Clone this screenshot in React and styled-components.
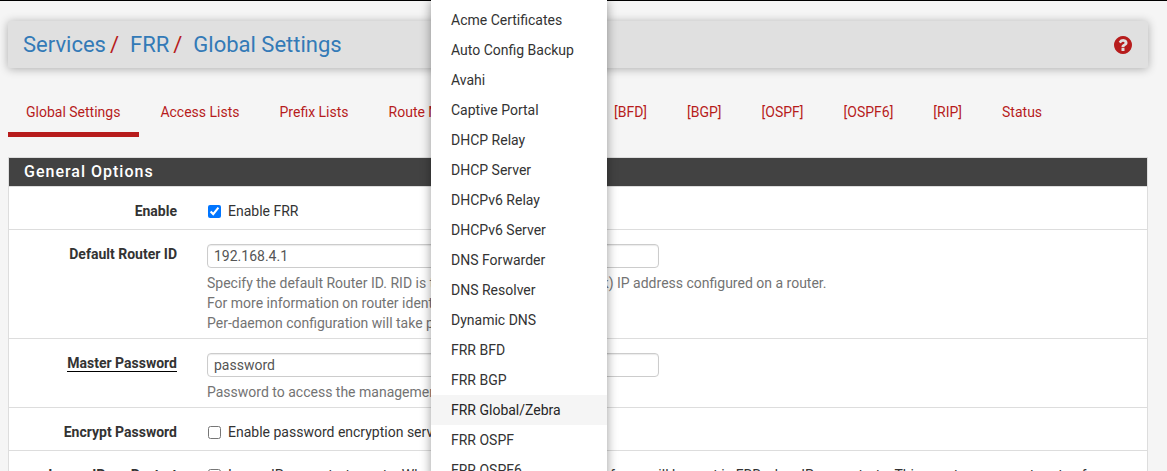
import React from "react";
import styled, { createGlobalStyle } from "styled-components";

const Global = createGlobalStyle`
  *, *::before, *::after { box-sizing: border-box; }
  body {
    margin: 0;
    background: #f5f5f5;
    color: #333;
    font: 14px/20px Roboto, sans-serif;
  }
  a { text-decoration: none; }
`;

const Page = styled.div`
  position: relative;
  height: 100vh;
  overflow: hidden;
  box-shadow: inset 0 1px #000;
  padding: 21px 19px 0 8px;
`;

const Header = styled.header`
  display: flex;
  align-items: center;
  justify-content: space-between;
  padding: 10px 16px 10px 15px;
  background: #e0e0e0;
  border-radius: 2px;
  box-shadow: 0 1px 10px rgba(0, 0, 0, 0.3);
`;

const Crumbs = styled.ol`
  display: flex;
  margin: 0;
  padding: 0;
  list-style: none;
  font-size: 22px;
  line-height: 27px;
`;

const Crumb = styled.li`
  a { color: #337ab7; }
  & + &::before {
    content: "/";
    color: #b71c1c;
    padding: 0 11px 0 4px;
  }
`;

const HelpLink = styled.a`
  display: flex;
  svg { display: block; }
`;

const Tabs = styled.nav`
  display: flex;
  margin: 23px 0 20px;
`;

const Tab = styled.a`
  padding: 11px 19px 10px 18px;
  margin-right: 3px;
  color: #b71c1c;
  white-space: nowrap;
  border-bottom: 5px solid ${(p) => (p.$active ? "#b71c1c" : "transparent")};
`;

const Panel = styled.section`
  background: #fff;
  border: 1px solid #ddd;
  overflow: hidden;
`;

const PanelTitle = styled.h2`
  margin: 0;
  padding: 4px 15px;
  background: #424242;
  color: #fff;
  font-size: 16px;
  line-height: 20px;
  font-weight: 500;
  letter-spacing: 1px;
`;

const Row = styled.div`
  display: grid;
  grid-template-columns: 2fr 10fr;
  margin: 0 -10px;
  padding: ${(p) => (p.$check ? "14px 0 8px" : "14px 0 5px")};
  border-top: 1px solid #ddd;
`;

const RowLabel = styled.label`
  padding: 0 15px;
  text-align: right;
  font-weight: 700;
  span { border-bottom: ${(p) => (p.$required ? "1px solid #000" : "0")}; }
`;

const Field = styled.div`
  padding: 0 15px;
`;

const TextInput = styled.input`
  display: block;
  width: calc(50% - 16px);
  height: 24px;
  padding: 0 6px;
  color: #555;
  font: inherit;
  background: #fff;
  border: 1px solid #ccc;
  border-radius: 4px;
  box-shadow: inset 0 1px 1px rgba(0, 0, 0, 0.08);
`;

const HelpText = styled.p`
  margin: 5px 0 0;
  color: #737373;
`;

const CheckLabel = styled.label`
  display: flex;
  gap: 6px;
  input { flex: none; width: 13px; height: 13px; margin: 4px 1px 0; }
`;

const Menu = styled.ul`
  position: absolute;
  top: 0;
  left: 431px;
  width: 176px;
  margin: 0;
  padding: 5px 0;
  list-style: none;
  background: #fff;
  box-shadow: 0 1px 10px rgba(0, 0, 0, 0.4);
`;

const MenuLink = styled.a`
  display: block;
  padding: 5px 20px;
  white-space: nowrap;
  color: ${(p) => (p.$active ? "#262626" : "#333")};
  background: ${(p) => (p.$active ? "#f5f5f5" : "transparent")};
`;

const crumbs = ["Services", "FRR", "Global Settings"];

const tabs = [
  "Global Settings", "Access Lists", "Prefix Lists", "Route Maps", "Raw Config",
  "[BFD]", "[BGP]", "[OSPF]", "[OSPF6]", "[RIP]", "Status",
];

const services = [
  "Acme Certificates", "Auto Config Backup", "Avahi", "Captive Portal", "DHCP Relay",
  "DHCP Server", "DHCPv6 Relay", "DHCPv6 Server", "DNS Forwarder", "DNS Resolver",
  "Dynamic DNS", "FRR BFD", "FRR BGP", "FRR Global/Zebra", "FRR OSPF", "FRR OSPF6",
];

function TextRow({ id, label, value, required, children }) {
  return (
    <Row>
      <RowLabel htmlFor={id} $required={required}><span>{label}</span></RowLabel>
      <Field>
        <TextInput id={id} type="text" defaultValue={value} />
        <HelpText>{children}</HelpText>
      </Field>
    </Row>
  );
}

function CheckRow({ id, label, checked, children }) {
  return (
    <Row $check>
      <RowLabel htmlFor={id}><span>{label}</span></RowLabel>
      <Field>
        <CheckLabel>
          <input id={id} type="checkbox" defaultChecked={checked} />
          <span>{children}</span>
        </CheckLabel>
      </Field>
    </Row>
  );
}

export default function App() {
  return (
    <Page>
      <Global />
      <Header>
        <Crumbs>
          {crumbs.map((c) => <Crumb key={c}><a href="#">{c}</a></Crumb>)}
        </Crumbs>
        <HelpLink href="#" aria-label="Help">
          <svg width="18" height="18" viewBox="0 0 1536 1536" fill="#b71c1c">
            <path d="M896 1248v-192q0-14-9-23t-23-9H672q-14 0-23 9t-9 23v192q0 14 9 23t23 9h192q14 0 23-9t9-23zm256-672q0-88-55.500-163T958 297t-170-41q-243 0-371 213-15 24 8 42l132 100q7 6 19 6 16 0 25-12 53-68 86-92 34-24 86-24 48 0 85.500 26t37.500 59q0 38-20 61t-68 45q-63 28-115.500 86.500T640 892v36q0 14 9 23t23 9h192q14 0 23-9t9-23q0-19 21.500-49.500T972 829q32-18 49-28.500t46-35 44.500-48 28-60.500 12.500-81zm384 192q0 209-103 385.500T1153.500 1433 768 1536t-385.500-103T103 1153.500 0 768t103-385.500T382.500 103 768 0t385.500 103T1433 382.500 1536 768z" />
          </svg>
        </HelpLink>
      </Header>
      <Tabs>
        {tabs.map((t, i) => <Tab key={t} href="#" $active={i === 0}>{t}</Tab>)}
      </Tabs>
      <Panel>
        <PanelTitle>General Options</PanelTitle>
        <CheckRow id="enable" label="Enable" checked>Enable FRR</CheckRow>
        <TextRow id="routerid" label="Default Router ID" value="192.168.4.1">
          Specify the default Router ID. RID is the highest logical (loopback) IP address configured on a router.<br />
          For more information on router identifiers see wikipedia.<br />
          Per-daemon configuration will take precedence.
        </TextRow>
        <TextRow id="password" label="Master Password" value="password" required>
          Password to access the management daemons. Required.
        </TextRow>
        <CheckRow id="encrypt" label="Encrypt Password">Enable password encryption service.</CheckRow>
        <CheckRow id="ipsec" label="Ignore IPsec Restart">
          Ignore IPsec restart events. When enabled, the IPsec VTI interfaces will be sent in FRR when IPsec restarts. This event can prevent parts of
        </CheckRow>
      </Panel>
      <Menu>
        {services.map((s) => (
          <li key={s}><MenuLink href="#" $active={s === "FRR Global/Zebra"}>{s}</MenuLink></li>
        ))}
      </Menu>
    </Page>
  );
}
